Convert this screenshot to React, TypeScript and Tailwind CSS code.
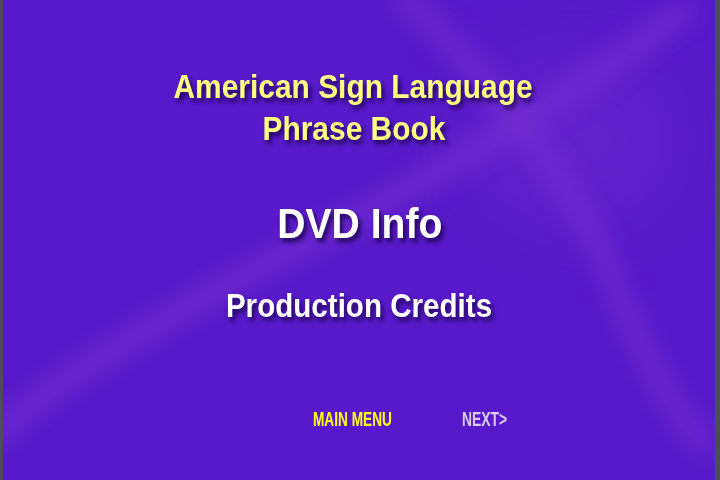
const Backdrop = () => (
  <svg
    className="absolute inset-0 h-full w-full"
    viewBox="0 0 712 480"
    preserveAspectRatio="none"
  >
    <defs>
      <filter id="soft" x="-20%" y="-20%" width="140%" height="140%">
        <feGaussianBlur stdDeviation="11" />
      </filter>
      <filter id="glow" x="-50%" y="-50%" width="200%" height="200%">
        <feGaussianBlur stdDeviation="40" />
      </filter>
    </defs>
    <ellipse cx="570" cy="140" rx="110" ry="90" fill="#7a34d6" opacity="0.3" filter="url(#glow)" />
    <path
      d="M685 6 Q 560 110 300 245 T -10 440"
      stroke="#7a32d2"
      strokeWidth="26"
      fill="none"
      opacity="0.55"
      filter="url(#soft)"
    />
    <path
      d="M395 -10 Q 560 150 610 280 T 710 450"
      stroke="#7a32d2"
      strokeWidth="26"
      fill="none"
      opacity="0.5"
      filter="url(#soft)"
    />
  </svg>
);

const shadow = '[text-shadow:3px_4px_5px_rgba(25,5,70,0.85)]';

const App = () => {
  return (
    <div className="relative h-[480px] w-[720px] overflow-hidden border-l-[3px] border-r-[5px] border-[#4b4e5a] bg-[#5719c9] font-['Liberation_Sans',Arial,sans-serif] font-bold">
      <Backdrop />
      <div className="relative flex flex-col">
        <div
          className={`flex flex-col items-center pt-[65px] pr-[11px] text-[34px] leading-[42px] text-[#fdfd80] ${shadow}`}
        >
          <span className="inline-block scale-x-[0.88] whitespace-nowrap">
            American Sign Language
          </span>
          <span className="inline-block scale-x-[0.88] whitespace-nowrap">
            Phrase Book
          </span>
        </div>
        <div
          className={`mt-[50px] flex justify-center pl-[1px] text-[43px] leading-[48px] text-white ${shadow}`}
        >
          <span className="inline-block scale-x-[0.91] whitespace-nowrap">
            DVD Info
          </span>
        </div>
        <div
          className={`mt-[38px] flex justify-center pl-[1px] text-[34px] leading-[40px] text-white ${shadow}`}
        >
          <span className="inline-block scale-x-[0.87] whitespace-nowrap">
            Production Credits
          </span>
        </div>
        <div className="mt-[84px] ml-[310px] flex gap-[70px] text-[21px] leading-[20px]">
          <span className="w-[79px] whitespace-nowrap text-[#ffff1a]">
            <span className="inline-block origin-left scale-x-[0.65]">
              MAIN MENU
            </span>
          </span>
          <span className="w-[45px] whitespace-nowrap text-[#dccdf5]">
            <span className="inline-block origin-left scale-x-[0.66]">
              NEXT&gt;
            </span>
          </span>
        </div>
      </div>
    </div>
  );
};

export default App;
